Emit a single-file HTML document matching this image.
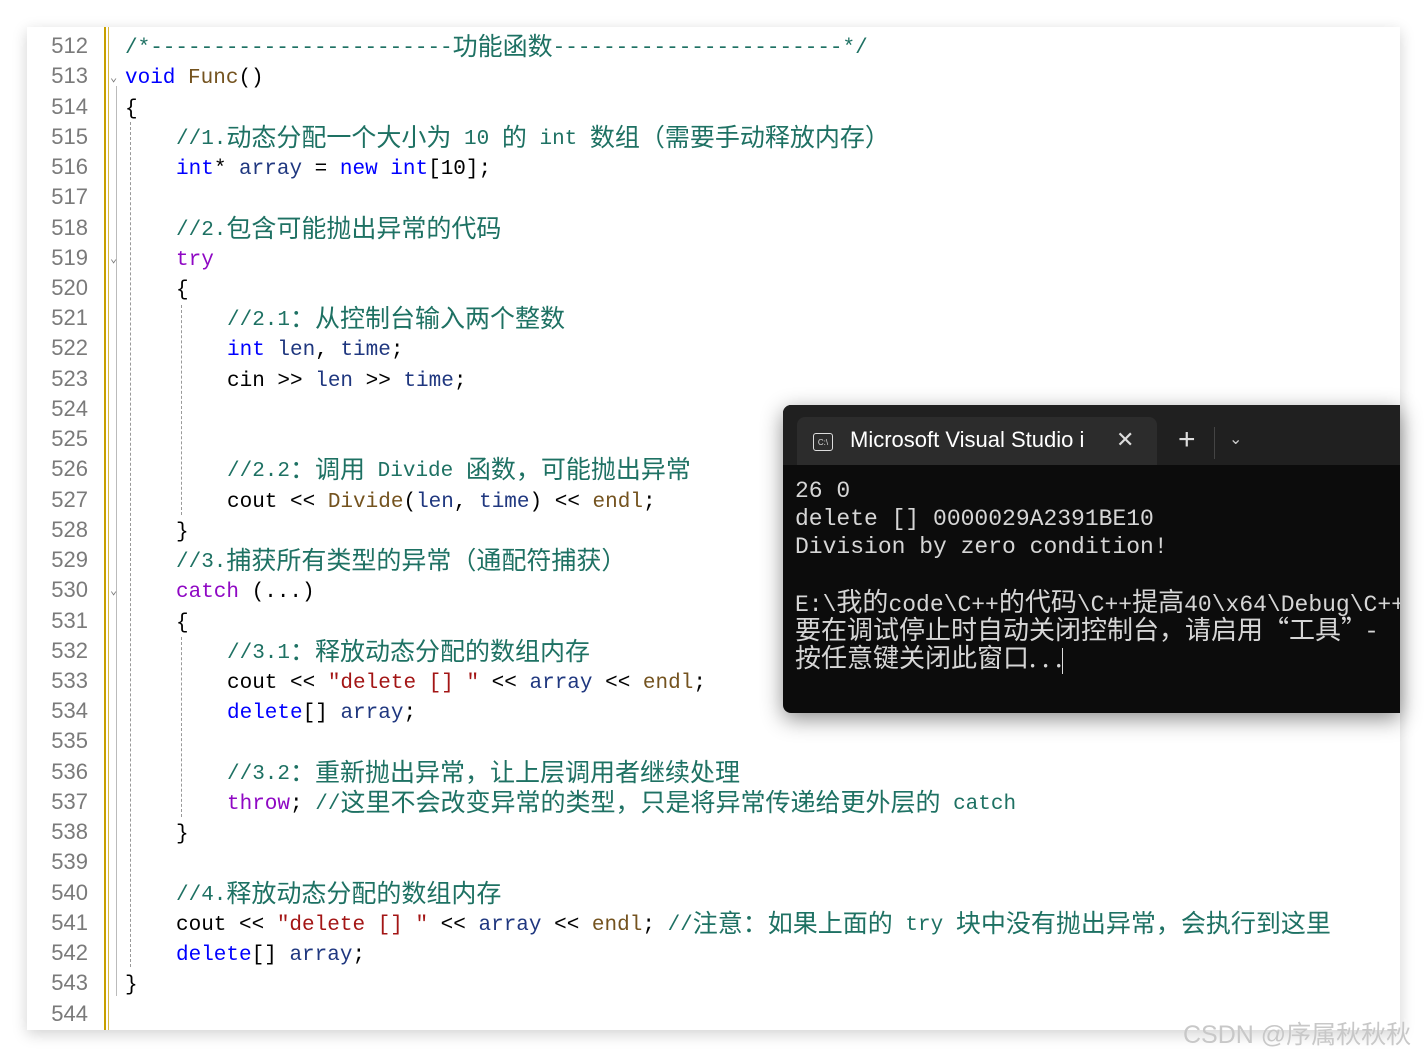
<!DOCTYPE html>
<html><head><meta charset="utf-8"><style>
body{margin:0;width:1427px;height:1058px;background:#fff;position:relative;overflow:hidden;font-family:"Liberation Mono","Noto Sans CJK SC",monospace;}
.panel{position:absolute;left:27px;top:27px;width:1373px;height:1003px;background:#fff;box-shadow:0 4px 14px rgba(0,0,0,.18);}
.ln{position:absolute;left:40px;width:48px;text-align:right;color:#7a7a7a;font-family:"Liberation Sans",sans-serif;font-size:22px;height:30px;line-height:30px;}
.l{position:absolute;font-size:21px;height:30px;line-height:30px;white-space:pre;color:#000;margin-top:3px;}
.c{font-family:"Noto Sans CJK SC",sans-serif;font-size:25px;line-height:20px;vertical-align:-2px;}
.cm{color:#1e7163}.k{color:#0000ff}.p{color:#8f08c4}.f{color:#74531f}.v{color:#1f377f}.s{color:#a31515}
.term{position:absolute;left:783px;top:405px;width:617px;height:308px;background:#0c0c0c;border-radius:8px 0 0 8px;box-shadow:0 6px 22px rgba(0,0,0,.45);overflow:hidden;}
.bar{position:absolute;left:0;top:0;width:100%;height:60px;background:#202020;}
.tab{position:absolute;left:14px;top:12px;width:360px;height:48px;background:#2c2c2c;border-radius:8px 8px 0 0;}
.t{position:absolute;left:12px;font-size:23px;color:#d6d6d6;white-space:pre;height:28px;line-height:28px;font-family:"Liberation Mono","Noto Sans CJK SC",monospace;}
.tc{font-family:"Noto Sans CJK SC",sans-serif;font-size:26px;line-height:20px;}
</style></head><body>
<div class="panel"></div>
<div style="position:absolute;left:104px;top:27px;width:2px;height:1003px;background:#c8a000"></div>
<div style="position:absolute;left:108px;top:27px;width:1px;height:1003px;background:#d8b840"></div>
<div style="position:absolute;left:116px;top:86px;width:1px;height:910px;background:#bbb"></div>
<div style="position:absolute;left:130px;top:122px;height:845px;border-left:1px dashed #999"></div>
<div style="position:absolute;left:181px;top:305px;height:210px;border-left:1px dashed #999"></div>
<div style="position:absolute;left:181px;top:637px;height:180px;border-left:1px dashed #999"></div>
<div style="position:absolute;left:110px;top:70px;color:#777;font-size:12px">⌄</div>
<div style="position:absolute;left:110px;top:251px;color:#777;font-size:12px">⌄</div>
<div style="position:absolute;left:110px;top:583px;color:#777;font-size:12px">⌄</div>

<div class="ln" style="top:31px">512</div><div class="ln" style="top:61px">513</div><div class="ln" style="top:92px">514</div><div class="ln" style="top:122px">515</div><div class="ln" style="top:152px">516</div><div class="ln" style="top:182px">517</div><div class="ln" style="top:213px">518</div><div class="ln" style="top:243px">519</div><div class="ln" style="top:273px">520</div><div class="ln" style="top:303px">521</div><div class="ln" style="top:333px">522</div><div class="ln" style="top:364px">523</div><div class="ln" style="top:394px">524</div><div class="ln" style="top:424px">525</div><div class="ln" style="top:454px">526</div><div class="ln" style="top:485px">527</div><div class="ln" style="top:515px">528</div><div class="ln" style="top:545px">529</div><div class="ln" style="top:575px">530</div><div class="ln" style="top:606px">531</div><div class="ln" style="top:636px">532</div><div class="ln" style="top:666px">533</div><div class="ln" style="top:696px">534</div><div class="ln" style="top:726px">535</div><div class="ln" style="top:757px">536</div><div class="ln" style="top:787px">537</div><div class="ln" style="top:817px">538</div><div class="ln" style="top:847px">539</div><div class="ln" style="top:878px">540</div><div class="ln" style="top:908px">541</div><div class="ln" style="top:938px">542</div><div class="ln" style="top:968px">543</div><div class="ln" style="top:999px">544</div>

<div class="l cm" style="left:125px;top:31px">/*------------------------<span class="c">功能函数</span>-----------------------*/</div>
<div class="l" style="left:125px;top:61px"><span class="k">void</span> <span class="f">Func</span>()</div>
<div class="l" style="left:125px;top:92px">{</div>
<div class="l cm" style="left:176px;top:122px">//1.<span class="c">动态分配一个大小为</span> 10 <span class="c">的</span> int <span class="c">数组（需要手动释放内存）</span></div>
<div class="l" style="left:176px;top:152px"><span class="k">int</span>* <span class="v">array</span> = <span class="k">new</span> <span class="k">int</span>[10];</div>
<div class="l cm" style="left:176px;top:213px">//2.<span class="c">包含可能抛出异常的代码</span></div>
<div class="l p" style="left:176px;top:243px">try</div>
<div class="l" style="left:176px;top:273px">{</div>
<div class="l cm" style="left:227px;top:303px">//2.1<span class="c">：从控制台输入两个整数</span></div>
<div class="l" style="left:227px;top:333px"><span class="k">int</span> <span class="v">len</span>, <span class="v">time</span>;</div>
<div class="l" style="left:227px;top:364px">cin &gt;&gt; <span class="v">len</span> &gt;&gt; <span class="v">time</span>;</div>
<div class="l cm" style="left:227px;top:454px">//2.2<span class="c">：调用</span> Divide <span class="c">函数，可能抛出异常</span></div>
<div class="l" style="left:227px;top:485px">cout &lt;&lt; <span class="f">Divide</span>(<span class="v">len</span>, <span class="v">time</span>) &lt;&lt; <span class="f">endl</span>;</div>
<div class="l" style="left:176px;top:515px">}</div>
<div class="l cm" style="left:176px;top:545px">//3.<span class="c">捕获所有类型的异常（通配符捕获）</span></div>
<div class="l" style="left:176px;top:575px"><span class="p">catch</span> (...)</div>
<div class="l" style="left:176px;top:606px">{</div>
<div class="l cm" style="left:227px;top:636px">//3.1<span class="c">：释放动态分配的数组内存</span></div>
<div class="l" style="left:227px;top:666px">cout &lt;&lt; <span class="s">"delete [] "</span> &lt;&lt; <span class="v">array</span> &lt;&lt; <span class="f">endl</span>;</div>
<div class="l" style="left:227px;top:696px"><span class="k">delete</span>[] <span class="v">array</span>;</div>
<div class="l cm" style="left:227px;top:757px">//3.2<span class="c">：重新抛出异常，让上层调用者继续处理</span></div>
<div class="l" style="left:227px;top:787px"><span class="p">throw</span>; <span class="cm">//<span class="c">这里不会改变异常的类型，只是将异常传递给更外层的</span> catch</span></div>
<div class="l" style="left:176px;top:817px">}</div>
<div class="l cm" style="left:176px;top:878px">//4.<span class="c">释放动态分配的数组内存</span></div>
<div class="l" style="left:176px;top:908px">cout &lt;&lt; <span class="s">"delete [] "</span> &lt;&lt; <span class="v">array</span> &lt;&lt; <span class="f">endl</span>; <span class="cm">//<span class="c">注意：如果上面的</span> try <span class="c">块中没有抛出异常，会执行到这里</span></span></div>
<div class="l" style="left:176px;top:938px"><span class="k">delete</span>[] <span class="v">array</span>;</div>
<div class="l" style="left:125px;top:968px">}</div>

<div class="term">
<div class="bar"></div>
<div class="tab"></div>
<div style="position:absolute;left:30px;top:28px;width:18px;height:16px;border:1.5px solid #ddd;border-radius:3px;color:#ddd;font-size:8px;line-height:18px;text-align:center;font-family:'Liberation Sans',sans-serif">C:\</div>
<div style="position:absolute;left:67px;top:22px;color:#fff;font-family:'Liberation Sans',sans-serif;font-size:22px;white-space:pre">Microsoft Visual Studio i</div>
<div style="position:absolute;left:333px;top:22px;color:#ddd;font-family:'Liberation Sans',sans-serif;font-size:22px">✕</div>
<div style="position:absolute;left:395px;top:18px;color:#ddd;font-family:'Liberation Sans',sans-serif;font-size:30px;font-weight:300">+</div>
<div style="position:absolute;left:431px;top:22px;width:1px;height:32px;background:#444"></div>
<div style="position:absolute;left:446px;top:24px;color:#ccc;font-family:'Liberation Sans',sans-serif;font-size:16px">⌄</div>
<div class="t" style="top:72px">26 0</div>
<div class="t" style="top:100px">delete [] 0000029A2391BE10</div>
<div class="t" style="top:128px">Division by zero condition!</div>
<div class="t" style="top:186px">E:\<span class="tc">我的</span>code\C++<span class="tc">的代码</span>\C++<span class="tc">提高</span>40\x64\Debug\C++</div>
<div class="t" style="top:214px"><span class="tc">要在调试停止时自动关闭控制台，请启用“工具”-</span></div>
<div class="t" style="top:242px"><span class="tc">按任意键关闭此窗口.&nbsp;.&nbsp;.</span><span style="display:inline-block;width:1px;height:26px;background:#ddd;vertical-align:middle"></span></div>
</div>
<div style="position:absolute;left:1183px;top:1015px;color:#c8c8c8;font-family:'Liberation Sans','Noto Sans CJK SC',sans-serif;font-size:25px;white-space:pre">CSDN @<span style="font-family:'Noto Sans CJK SC'">序属秋秋秋</span></div>
</body></html>
